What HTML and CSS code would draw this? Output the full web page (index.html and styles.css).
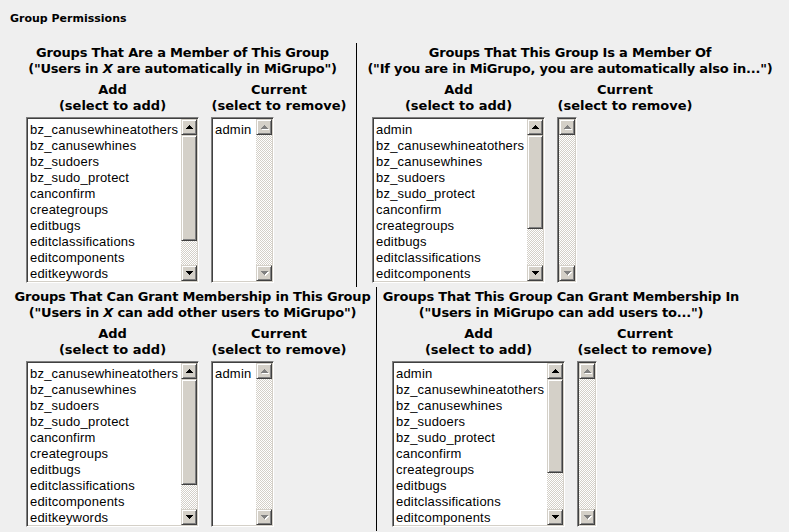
FILE: index.html
```html
<!DOCTYPE html>
<html lang="es">

<head>
    <meta charset="UTF-8" />
    <title>Group Permissions - MiGrupo</title>
    <link rel="stylesheet" href="styles.css">
</head>

<body>
    <div class="title">Group Permissions</div>

    <!-- Membership -->
    <div class="perm-row">
        <div class="perm-cell cell-left row-one-left">
            <div class="cell-head">Groups That Are a Member of This Group<br>("Users in <i>X</i> are automatically in MiGrupo")</div>
            <div class="pick pick-left">
                <div class="pick-head">Add<br>(select to add)</div>
                <div class="pick-head">Current<br>(select to remove)</div>
                <div class="listbox wide" role="listbox">
                    <div class="options">
                        <div>bz_canusewhineatothers</div>
                        <div>bz_canusewhines</div>
                        <div>bz_sudoers</div>
                        <div>bz_sudo_protect</div>
                        <div>canconfirm</div>
                        <div>creategroups</div>
                        <div>editbugs</div>
                        <div>editclassifications</div>
                        <div>editcomponents</div>
                        <div>editkeywords</div>
                    </div>
                    <div class="scrollbar">
                        <div class="sb-btn"><svg width="7" height="4" viewBox="0 0 7 4"><path d="M3 0h1v1h-1zM2 1h3v1h-3zM1 2h5v1h-5zM0 3h7v1h-7z" /></svg></div>
                        <div class="sb-thumb thumb-long"></div>
                        <div class="sb-track"></div>
                        <div class="sb-btn"><svg width="7" height="4" viewBox="0 0 7 4"><path d="M0 0h7v1h-7zM1 1h5v1h-5zM2 2h3v1h-3zM3 3h1v1h-1z" /></svg></div>
                    </div>
                </div>
                <div class="listbox short" role="listbox">
                    <div class="options">
                        <div>admin</div>
                    </div>
                    <div class="scrollbar">
                        <div class="sb-btn off"><svg width="8" height="5" viewBox="0 0 8 5"><path class="hl" d="M4 1h1v1h-1zM3 2h3v1h-3zM2 3h5v1h-5zM1 4h7v1h-7z" /><path d="M3 0h1v1h-1zM2 1h3v1h-3zM1 2h5v1h-5zM0 3h7v1h-7z" /></svg></div>
                        <div class="sb-track"></div>
                        <div class="sb-btn off"><svg width="8" height="5" viewBox="0 0 8 5"><path class="hl" d="M1 1h7v1h-7zM2 2h5v1h-5zM3 3h3v1h-3zM4 4h1v1h-1z" /><path d="M0 0h7v1h-7zM1 1h5v1h-5zM2 2h3v1h-3zM3 3h1v1h-1z" /></svg></div>
                    </div>
                </div>
            </div>
        </div>
        <div class="perm-cell row-one-right">
            <div class="cell-head">Groups That This Group Is a Member Of<br>("If you are in MiGrupo, you are automatically also in...")</div>
            <div class="pick pick-right">
                <div class="pick-head">Add<br>(select to add)</div>
                <div class="pick-head">Current<br>(select to remove)</div>
                <div class="listbox wide" role="listbox">
                    <div class="options">
                        <div>admin</div>
                        <div>bz_canusewhineatothers</div>
                        <div>bz_canusewhines</div>
                        <div>bz_sudoers</div>
                        <div>bz_sudo_protect</div>
                        <div>canconfirm</div>
                        <div>creategroups</div>
                        <div>editbugs</div>
                        <div>editclassifications</div>
                        <div>editcomponents</div>
                    </div>
                    <div class="scrollbar">
                        <div class="sb-btn"><svg width="7" height="4" viewBox="0 0 7 4"><path d="M3 0h1v1h-1zM2 1h3v1h-3zM1 2h5v1h-5zM0 3h7v1h-7z" /></svg></div>
                        <div class="sb-thumb thumb-mid"></div>
                        <div class="sb-track"></div>
                        <div class="sb-btn"><svg width="7" height="4" viewBox="0 0 7 4"><path d="M0 0h7v1h-7zM1 1h5v1h-5zM2 2h3v1h-3zM3 3h1v1h-1z" /></svg></div>
                    </div>
                </div>
                <div class="listbox empty" role="listbox">
                    <div class="scrollbar">
                        <div class="sb-btn off"><svg width="8" height="5" viewBox="0 0 8 5"><path class="hl" d="M4 1h1v1h-1zM3 2h3v1h-3zM2 3h5v1h-5zM1 4h7v1h-7z" /><path d="M3 0h1v1h-1zM2 1h3v1h-3zM1 2h5v1h-5zM0 3h7v1h-7z" /></svg></div>
                        <div class="sb-track"></div>
                        <div class="sb-btn off"><svg width="8" height="5" viewBox="0 0 8 5"><path class="hl" d="M1 1h7v1h-7zM2 2h5v1h-5zM3 3h3v1h-3zM4 4h1v1h-1z" /><path d="M0 0h7v1h-7zM1 1h5v1h-5zM2 2h3v1h-3zM3 3h1v1h-1z" /></svg></div>
                    </div>
                </div>
            </div>
        </div>
    </div>

    <!-- Bless (grant membership) -->
    <div class="perm-row">
        <div class="perm-cell cell-left row-two-left">
            <div class="cell-head">Groups That Can Grant Membership in This Group<br>("Users in <i>X</i> can add other users to MiGrupo")</div>
            <div class="pick pick-left">
                <div class="pick-head">Add<br>(select to add)</div>
                <div class="pick-head">Current<br>(select to remove)</div>
                <div class="listbox wide" role="listbox">
                    <div class="options">
                        <div>bz_canusewhineatothers</div>
                        <div>bz_canusewhines</div>
                        <div>bz_sudoers</div>
                        <div>bz_sudo_protect</div>
                        <div>canconfirm</div>
                        <div>creategroups</div>
                        <div>editbugs</div>
                        <div>editclassifications</div>
                        <div>editcomponents</div>
                        <div>editkeywords</div>
                    </div>
                    <div class="scrollbar">
                        <div class="sb-btn"><svg width="7" height="4" viewBox="0 0 7 4"><path d="M3 0h1v1h-1zM2 1h3v1h-3zM1 2h5v1h-5zM0 3h7v1h-7z" /></svg></div>
                        <div class="sb-thumb thumb-long"></div>
                        <div class="sb-track"></div>
                        <div class="sb-btn"><svg width="7" height="4" viewBox="0 0 7 4"><path d="M0 0h7v1h-7zM1 1h5v1h-5zM2 2h3v1h-3zM3 3h1v1h-1z" /></svg></div>
                    </div>
                </div>
                <div class="listbox short" role="listbox">
                    <div class="options">
                        <div>admin</div>
                    </div>
                    <div class="scrollbar">
                        <div class="sb-btn off"><svg width="8" height="5" viewBox="0 0 8 5"><path class="hl" d="M4 1h1v1h-1zM3 2h3v1h-3zM2 3h5v1h-5zM1 4h7v1h-7z" /><path d="M3 0h1v1h-1zM2 1h3v1h-3zM1 2h5v1h-5zM0 3h7v1h-7z" /></svg></div>
                        <div class="sb-track"></div>
                        <div class="sb-btn off"><svg width="8" height="5" viewBox="0 0 8 5"><path class="hl" d="M1 1h7v1h-7zM2 2h5v1h-5zM3 3h3v1h-3zM4 4h1v1h-1z" /><path d="M0 0h7v1h-7zM1 1h5v1h-5zM2 2h3v1h-3zM3 3h1v1h-1z" /></svg></div>
                    </div>
                </div>
            </div>
        </div>
        <div class="perm-cell row-two-right">
            <div class="cell-head">Groups That This Group Can Grant Membership In<br>("Users in MiGrupo can add users to...")</div>
            <div class="pick pick-right">
                <div class="pick-head">Add<br>(select to add)</div>
                <div class="pick-head">Current<br>(select to remove)</div>
                <div class="listbox wide" role="listbox">
                    <div class="options">
                        <div>admin</div>
                        <div>bz_canusewhineatothers</div>
                        <div>bz_canusewhines</div>
                        <div>bz_sudoers</div>
                        <div>bz_sudo_protect</div>
                        <div>canconfirm</div>
                        <div>creategroups</div>
                        <div>editbugs</div>
                        <div>editclassifications</div>
                        <div>editcomponents</div>
                    </div>
                    <div class="scrollbar">
                        <div class="sb-btn"><svg width="7" height="4" viewBox="0 0 7 4"><path d="M3 0h1v1h-1zM2 1h3v1h-3zM1 2h5v1h-5zM0 3h7v1h-7z" /></svg></div>
                        <div class="sb-thumb thumb-mid"></div>
                        <div class="sb-track"></div>
                        <div class="sb-btn"><svg width="7" height="4" viewBox="0 0 7 4"><path d="M0 0h7v1h-7zM1 1h5v1h-5zM2 2h3v1h-3zM3 3h1v1h-1z" /></svg></div>
                    </div>
                </div>
                <div class="listbox empty" role="listbox">
                    <div class="scrollbar">
                        <div class="sb-btn off"><svg width="8" height="5" viewBox="0 0 8 5"><path class="hl" d="M4 1h1v1h-1zM3 2h3v1h-3zM2 3h5v1h-5zM1 4h7v1h-7z" /><path d="M3 0h1v1h-1zM2 1h3v1h-3zM1 2h5v1h-5zM0 3h7v1h-7z" /></svg></div>
                        <div class="sb-track"></div>
                        <div class="sb-btn off"><svg width="8" height="5" viewBox="0 0 8 5"><path class="hl" d="M1 1h7v1h-7zM2 2h5v1h-5zM3 3h3v1h-3zM4 4h1v1h-1z" /><path d="M0 0h7v1h-7zM1 1h5v1h-5zM2 2h3v1h-3zM3 3h1v1h-1z" /></svg></div>
                    </div>
                </div>
            </div>
        </div>
    </div>
</body>

</html>
```

FILE: styles.css
```css
* {
    box-sizing: border-box;
}

html,
body {
    margin: 0;
    padding: 0;
    background: #efefef;
    color: #000;
    overflow: hidden;
}

body {
    font-family: "DejaVu Sans", Verdana, sans-serif;
}

.title {
    padding: 12px 0 0 10px;
    font-size: 11px;
    line-height: 14px;
    font-weight: bold;
}

.perm-row {
    display: flex;
    margin-left: 9px;
}

.title + .perm-row {
    margin-top: 17px;
}

.perm-cell {
    padding: 2px 0 4px 0;
}

.cell-left {
    border-right: 1px solid #000;
}

.row-one-left {
    width: 348px;
}

.row-one-right {
    width: 426px;
}

.row-two-left {
    width: 368px;
}

.row-two-right {
    width: 368px;
}

.cell-head {
    font-size: 13px;
    line-height: 16px;
    font-weight: bold;
    letter-spacing: -0.2px;
    text-align: center;
    white-space: nowrap;
}

.pick {
    display: grid;
    grid-template-columns: 173px 136px;
    column-gap: 12px;
    row-gap: 3px;
    margin-top: 5px;
    align-items: start;
}

.pick-left {
    margin-left: 17px;
}

.pick-right {
    margin-left: 15px;
}

.pick-head {
    font-size: 13px;
    line-height: 16px;
    font-weight: bold;
    text-align: center;
    white-space: nowrap;
}

/* classic sunken list box */
.listbox {
    display: flex;
    height: 166px;
    padding: 1px;
    background: #fff;
    border: 1px solid;
    border-color: #808080 #fff #fff #808080;
    box-shadow: inset 1px 1px 0 #404040, inset -1px -1px 0 #d4d0c8;
    font-family: "Liberation Sans", Arial, sans-serif;
    font-size: 13px;
    line-height: 16px;
    letter-spacing: 0.2px;
}

.listbox.wide {
    width: 173px;
}

.listbox.short {
    width: 63px;
}

.listbox.empty {
    width: 20px;
}

.options {
    flex: 1;
    overflow: hidden;
    padding: 3px 0 0 2px;
    white-space: nowrap;
}

.scrollbar {
    width: 16px;
    display: flex;
    flex-direction: column;
}

.sb-btn,
.sb-thumb {
    background: #d4d0c8;
    border: 1px solid;
    border-color: #d4d0c8 #404040 #404040 #d4d0c8;
    box-shadow: inset 1px 1px 0 #fff, inset -1px -1px 0 #808080;
}

.sb-btn {
    height: 16px;
    flex-shrink: 0;
    display: flex;
    align-items: center;
    justify-content: center;
}

.sb-btn svg {
    display: block;
    fill: #000;
}

.sb-btn.off svg {
    fill: #808080;
    margin: 1px 0 0 1px;
}

.sb-btn.off svg .hl {
    fill: #fff;
}

.sb-thumb {
    flex-shrink: 0;
}

.sb-thumb.thumb-long {
    height: 106px;
}

.sb-thumb.thumb-mid {
    height: 94px;
}

.sb-track {
    flex: 1;
    background: repeating-conic-gradient(#d4d0c8 0 25%, #fff 0 50%) 0 0 / 2px 2px;
}
```
